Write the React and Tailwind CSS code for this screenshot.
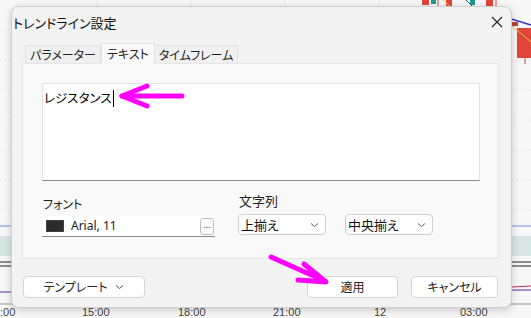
import React from "react";

const jp = { fontFamily: '"Noto Sans CJK JP", "Noto Sans", sans-serif', fontFeatureSettings: '"palt"' };

function Chevron() {
  return (
    <svg width="9" height="6" viewBox="0 0 9 6" className="shrink-0">
      <path d="M1 1.5 L4.5 4.5 L8 1.5" fill="none" stroke="#555" strokeWidth="1" />
    </svg>
  );
}

function Background() {
  const vlines = [97, 191, 285, 379, 473];
  const hlines = [30, 60, 90, 120, 150, 180, 210];
  return (
    <svg className="absolute inset-0 z-0" width="531" height="318" viewBox="0 0 531 318">
      <rect width="531" height="318" fill="#f7f7f7" />
      {vlines.map((x) => (
        <line key={x} x1={x} y1="0" x2={x} y2="304" stroke="#e2e2e2" strokeDasharray="2 2" />
      ))}
      {hlines.map((y) => (
        <line key={y} x1="0" y1={y} x2="531" y2={y} stroke="#e6e6e6" strokeDasharray="2 2" />
      ))}
      <line x1="0" y1="226" x2="531" y2="226" stroke="#6c8fd8" />
      <rect x="0" y="236" width="531" height="20" fill="#d7e6e4" />
      <line x1="0" y1="262" x2="531" y2="262" stroke="#222" />
      <line x1="0" y1="266" x2="531" y2="266" stroke="#222" />
      <line x1="0" y1="292" x2="531" y2="290" stroke="#5a2ca8" />
      <line x1="0" y1="304" x2="531" y2="304" stroke="#999" />
      <rect x="422" y="0" width="7" height="5" fill="#e0453a" />
      <rect x="431" y="0" width="5" height="4" fill="#1c9a8c" />
      <line x1="438" y1="0" x2="438" y2="6" stroke="#e0453a" />
      <rect x="446" y="0" width="6" height="6" fill="#e0453a" />
      <line x1="443" y1="0" x2="450" y2="6" stroke="#f0c040" />
      <rect x="470" y="0" width="5" height="5" fill="#1c9a8c" />
      <line x1="466" y1="0" x2="472" y2="6" stroke="#1a5fa0" />
      <rect x="486" y="0" width="7" height="6" fill="#e0453a" />
      <line x1="496" y1="0" x2="496" y2="6" stroke="#e0453a" />
      <line x1="508" y1="18" x2="531" y2="25" stroke="#3b2fc0" strokeWidth="1.5" />
      <rect x="517" y="28" width="14" height="30" fill="#e0453a" />
      <rect x="512" y="22" width="6" height="4" fill="#c04040" />
      <line x1="512" y1="26" x2="531" y2="42" stroke="#f0c040" />
      <line x1="525" y1="58" x2="525" y2="64" stroke="#e0453a" />
      <line x1="512" y1="287" x2="531" y2="286" stroke="#c03050" />
      <g fill="#444" fontSize="11" style={{ fontFamily: '"Liberation Sans", sans-serif' }}>
        <text x="0" y="316">:00</text>
        <text x="82" y="316">15:00</text>
        <text x="178" y="316">18:00</text>
        <text x="273" y="316">21:00</text>
        <text x="374" y="316">12</text>
        <text x="460" y="316">03:00</text>
      </g>
    </svg>
  );
}

function Arrows() {
  return (
    <svg className="absolute inset-0 z-20 pointer-events-none" width="531" height="318" viewBox="0 0 531 318">
      <g stroke="#ff00ff" strokeWidth="5" strokeLinecap="round" strokeLinejoin="round" fill="none">
        <path d="M182 96 L122 96" />
        <path d="M147 86 L122 96 L147 106" />
        <path d="M271 257 L325 281" />
        <path d="M304 264 L326 282 L298 280" />
      </g>
    </svg>
  );
}

export default function App() {
  return (
    <div className="relative w-[531px] h-[318px] overflow-hidden" style={jp}>
      <Background />
      <div className="absolute z-10 left-[11px] top-[6px] w-[501px] h-[302px] rounded-[8px] bg-[#f3f3f3] border border-[#cfcfcf] shadow-[0_2px_8px_rgba(0,0,0,0.18)] flex flex-col">
        <div className="h-[30px] shrink-0 flex items-center justify-between pl-[1px] pr-[8px]">
          <span className="text-[13px] text-[#111] leading-none mt-[1px] whitespace-nowrap">トレンドライン設定</span>
          <svg width="12" height="12" viewBox="0 0 12 12">
            <path d="M1 1 L11 11 M11 1 L1 11" stroke="#222" strokeWidth="1.1" />
          </svg>
        </div>
        <div className="ml-[13px] mt-[5px] flex items-end h-[21px] shrink-0">
          <div className="h-[18px] px-[4px] whitespace-nowrap flex items-center border border-b-0 border-[#e2e2e2] bg-[#f0f0f0] text-[12px] text-[#222]">
            パラメーター
          </div>
          <div className="h-[21px] px-[5px] whitespace-nowrap flex items-start pt-[1px] border border-b-0 border-[#e2e2e2] bg-[#f9f9f9] text-[12px] text-[#222] relative z-10 -mb-[1px]">
            テキスト
          </div>
          <div className="h-[18px] px-[4px] whitespace-nowrap flex items-center border border-b-0 border-l-0 border-[#e2e2e2] bg-[#f0f0f0] text-[12px] text-[#222]">
            タイムフレーム
          </div>
        </div>
        <div className="ml-[10px] w-[477px] h-[196px] shrink-0 bg-[#f9f9f9] border border-[#e6e6e6] flex flex-col px-[19px] pt-[19px]">
          <div className="w-[438px] h-[98px] shrink-0 bg-white border border-[#e2e2e2] border-b-[#8a8a8a] px-[1px] pt-[5px]">
            <div className="flex items-center text-[12.5px] text-black leading-[18px]">
              <span>レジスタンス</span>
              <span className="inline-block w-[1px] h-[17px] bg-black ml-[1px]" />
            </div>
          </div>
          <div className="flex mt-[13px]">
            <div className="flex flex-col w-[173px]">
              <span className="text-[12px] text-[#222] leading-none mt-[4px] ml-[1px]">フォント</span>
              <div className="mt-[6px] h-[21px] bg-white border-b border-[#8a8a8a] flex items-center pl-[4px] pr-[1px]">
                <span className="w-[18px] h-[12px] bg-[#2b2b2b] border border-[#444]" />
                <span className="ml-[7px] text-[12px] text-[#222] flex-1" style={{ fontFamily: '"Noto Sans", "Liberation Sans", sans-serif' }}>Arial, 11</span>
                <span className="w-[14px] h-[17px] border border-[#bdbdbd] rounded-[3px] bg-[#fbfbfb] flex items-center justify-center text-[9px] text-[#555] leading-none pb-[3px]">...</span>
              </div>
            </div>
            <div className="flex flex-col ml-[23px]">
              <span className="text-[13px] text-[#222] leading-none ml-[1px]">文字列</span>
              <div className="flex gap-[19px] mt-[7px]">
                <div className="w-[88px] h-[21px] bg-white border border-[#cfcfcf] rounded-[4px] flex items-center justify-between pl-[2px] pr-[6px]">
                  <span className="text-[13px] text-[#111]">上揃え</span>
                  <Chevron />
                </div>
                <div className="w-[88px] h-[21px] bg-white border border-[#cfcfcf] rounded-[4px] flex items-center justify-between pl-[2px] pr-[6px]">
                  <span className="text-[13px] text-[#111]">中央揃え</span>
                  <Chevron />
                </div>
              </div>
            </div>
          </div>
        </div>
        <div className="flex items-center ml-[11px] mr-[13px] mt-[17px] shrink-0">
          <div className="w-[122px] h-[22px] bg-white border border-[#d5d5d5] rounded-[4px] flex items-center justify-center gap-[8px] text-[12px] text-[#222]">
            <span>テンプレート</span>
            <Chevron />
          </div>
          <div className="flex-1" />
          <div className="w-[91px] h-[22px] bg-white border border-[#d5d5d5] rounded-[4px] flex items-center justify-center text-[12px] text-[#222]">
            適用
          </div>
          <div className="w-[87px] h-[22px] ml-[13px] bg-white border border-[#d5d5d5] rounded-[4px] flex items-center justify-center text-[12px] text-[#222]">
            キャンセル
          </div>
        </div>
      </div>
      <Arrows />
    </div>
  );
}
